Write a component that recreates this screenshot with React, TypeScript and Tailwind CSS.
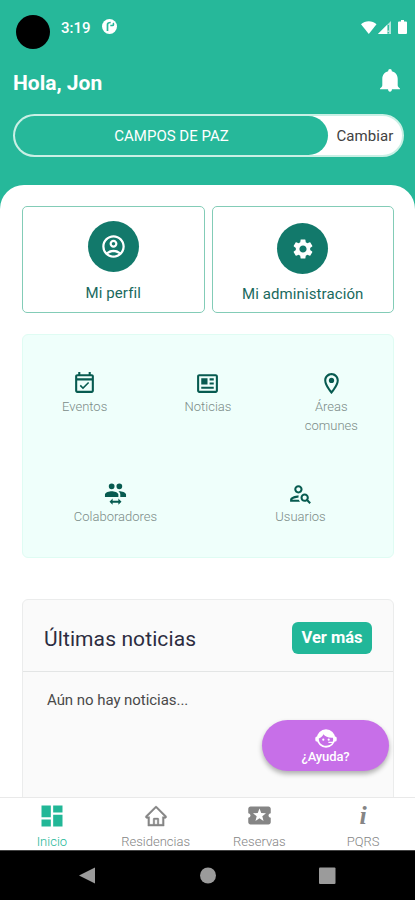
import { ReactNode } from "react";
import { AiOutlineHome } from "react-icons/ai";
import { BiNews } from "react-icons/bi";
import {
  MdDashboard,
  MdLocalActivity,
  MdOutlineAccountCircle,
  MdOutlineEventAvailable,
  MdOutlineLocationOn,
  MdOutlinePersonSearch,
  MdSettings,
} from "react-icons/md";

const BellIcon = () => (
  <svg className="mt-[4px]" width="20" height="24" viewBox="0 0 20 24" fill="white">
    <path d="M8.200 2.200V1.800a1.800 1.800 0 0 1 3.600 0v.4c3.700 1 5.900 3.900 5.900 7.600v6.400c0 1.200 1 2.300 2.300 3.400v.6H0v-.6c1.300-1.100 2.300-2.200 2.300-3.400V9.800c0-3.700 2.200-6.600 5.900-7.600ZM8 20h4c0 1.600-.8 2.800-2 2.800S8 21.600 8 20Z" />
  </svg>
);

const TeamSwitchIcon = () => (
  <svg width="23" height="24" viewBox="0 0 24 24" fill="currentColor">
    <path d="M16 9c2.330 0 7 1.170 7 3.500V15h-6v-2.500c0-1.500-.81-2.610-1.960-3.450L16 9M8 9c2.330 0 7 1.170 7 3.500V15H1v-2.500C1 10.170 5.670 9 8 9m0-2a3 3 0 1 1 0-6 3 3 0 0 1 0 6m8 0a3 3 0 1 1 0-6 3 3 0 0 1 0 6m-7 9.750V19h6v-2.250L18.250 20 15 23.250V21H9v2.250L5.750 20 9 16.750Z" />
  </svg>
);

const AgentIcon = () => (
  <svg width="22" height="20" viewBox="0 0 22 20">
    <circle cx="11" cy="9.500" r="9.200" fill="white" />
    <rect x="0.300" y="7.500" width="21.400" height="5" rx="1.500" fill="white" />
    <path
      d="M3.800 9.500c2.200-.8 3.700-2.100 4.600-4.200 1.900 2.500 5 3.800 9.600 3.500.3 1.500.2 2.800-.3 4h-4.300v1.300h3.700c-1.300 1.700-3.600 2.700-6.100 2.700-4.100 0-7.400-3-7.200-7.300Z"
      fill="#c76fe8"
    />
    <circle cx="8.300" cy="10.700" r="1.100" fill="white" />
    <circle cx="13.700" cy="10.700" r="1.100" fill="white" />
  </svg>
);

const StatusBar = () => (
  <div className="flex h-[65px] items-start pl-4 pr-[7px] pt-[15px] text-white">
    <span className="h-[34px] w-[34px] rounded-full bg-black" />
    <span className="ml-[11px] mt-[3px] text-[15px] font-medium leading-5">3:19</span>
    <svg className="ml-[11px] mt-[4px]" width="15" height="15" viewBox="0 0 15 15">
      <circle cx="7.500" cy="7.500" r="7.500" fill="white" />
      <path d="M5.500 12V5.500c0-1.300 1-2 3.200-2M8.300 6.500h2.200c1.100 0 1.400-1.700.3-2.200" fill="none" stroke="#26b89a" strokeWidth="1.700" />
    </svg>
    <div className="grow" />
    <svg className="mt-[5px]" width="48" height="15" viewBox="0 0 48 15" fill="white">
      <path d="M1 4.200C5 .3 12.500.3 16.500 4.200L8.800 14Z" />
      <path d="M18 14 31 1v13Z" fillOpacity=".65" />
      <path d="M18 14 27 5v9Z" />
      <path d="M28.300 5v5.500M28.300 12v1.500" stroke="#26b89a" strokeWidth="1.200" />
      <path d="M41 0h3v1.500h2q1 0 1 1V13q0 1-1 1h-7q-1 0-1-1V2.500q0-1 1-1h2Z" />
    </svg>
  </div>
);

const ProfileCard = ({ icon, label, lower }: { icon: ReactNode; label: string; lower?: boolean }) => (
  <div
    className={`flex h-[107px] flex-1 flex-col items-center rounded-[5px] border border-[#83ccb7] bg-white ${
      lower ? "pt-4" : "pt-[14px]"
    }`}
  >
    <div className="flex h-[51px] w-[51px] items-center justify-center rounded-full bg-[#12796b] text-white">
      {icon}
    </div>
    <p className={`${lower ? "mt-[10px]" : "mt-[11px]"} text-[15px] leading-5 tracking-[0.1px] text-[#19695d]`}>
      {label}
    </p>
  </div>
);

const Shortcut = ({ icon, label }: { icon: ReactNode; label: string }) => (
  <div className="flex flex-1 flex-col items-center text-[#075b50]">
    {icon}
    <p className="mt-px w-[86px] text-center text-[13px] font-light leading-[19px] text-[#7b8b87]">
      {label}
    </p>
  </div>
);

const tabs = [
  { label: "Inicio", icon: <MdDashboard size={28} />, active: true },
  { label: "Residencias", icon: <AiOutlineHome size={24} stroke="currentColor" strokeWidth={18} /> },
  { label: "Reservas", icon: <MdLocalActivity size={27} /> },
  {
    label: "PQRS",
    icon: (
      <span className="font-['Liberation_Serif',serif] text-[26px] font-bold italic leading-6">i</span>
    ),
  },
];

const App = () => {
  return (
    <div className="relative flex h-[900px] w-[415px] flex-col overflow-hidden bg-[#26b89a] font-[Roboto,sans-serif]">
      <StatusBar />
      <header className="h-[120px] shrink-0">
        <div className="flex h-[49px] items-start justify-between pl-[13px] pr-[15px] text-white">
          <h1 className="mt-[4px] text-[21px] font-bold leading-7">Hola, Jon</h1>
          <BellIcon />
        </div>
        <div className="ml-[13px] flex h-[43px] w-[391px] rounded-full border-2 border-[#c9f0e5] bg-white">
          <div className="flex w-[313px] items-center justify-center rounded-full bg-[#26b89a] pt-px text-[15px] text-white">
            CAMPOS DE PAZ
          </div>
          <span className="flex grow items-center justify-center pt-px text-[15px] tracking-[0.1px] text-[#414141]">
            Cambiar
          </span>
        </div>
      </header>
      <main className="h-[612px] shrink-0 overflow-hidden rounded-t-[24px] bg-white pl-[22px] pr-[21px] pt-[21px]">
        <section className="flex gap-[7px]">
          <ProfileCard icon={<MdOutlineAccountCircle size={27} />} label="Mi perfil" />
          <ProfileCard icon={<MdSettings size={24} />} label="Mi administración" lower />
        </section>
        <section className="mt-[21px] h-[224px] rounded-md border border-[#dffcf3] bg-[#effffb] pt-[36px]">
          <div className="flex h-[110px]">
            <Shortcut icon={<MdOutlineEventAvailable size={25} />} label="Eventos" />
            <Shortcut icon={<BiNews size={25} />} label="Noticias" />
            <Shortcut icon={<MdOutlineLocationOn size={25} />} label="Áreas comunes" />
          </div>
          <div className="flex items-end">
            <Shortcut icon={<TeamSwitchIcon />} label="Colaboradores" />
            <Shortcut icon={<MdOutlinePersonSearch size={25} />} label="Usuarios" />
          </div>
        </section>
        <section className="mt-[41px] h-[210px] rounded-t-md border border-[#ebecec] bg-[#fafafa]">
          <div className="flex h-[72px] items-center justify-between border-b border-[#e3e5e5] pl-[21px] pr-[21px] pt-[5px]">
            <h2 className="pt-0.5 text-[21px] leading-7 tracking-[0.1px] text-[#2c2c40]">Últimas noticias</h2>
            <button className="h-8 w-20 rounded-md bg-[#22b799] pt-px text-[16.5px] font-bold text-white">
              Ver más
            </button>
          </div>
          <p className="pl-[24px] pt-[18px] text-[15px] leading-5 tracking-[-0.05px] text-[#494949]">
            Aún no hay noticias...
          </p>
        </section>
      </main>
      <button className="absolute left-[262px] top-[720px] flex h-[51px] w-[127px] flex-col items-center rounded-full bg-[#c76fe8] pt-[9px] text-xs font-medium leading-[15px] text-white shadow-[0_3px_5px_rgba(0,0,0,0.3)]">
        <AgentIcon />
        <span className="text-[13px] tracking-[-0.1px]">¿Ayuda?</span>
      </button>
      <nav className="flex h-[53px] shrink-0 overflow-hidden border-t border-[#e9e9e9] bg-white">
        {tabs.map((tab) => (
          <div
            key={tab.label}
            className={`flex flex-1 flex-col items-center pt-1 ${
              tab.active ? "text-[#22b797]" : "text-[#858585]"
            }`}
          >
            <div className="flex h-[27px] items-center">{tab.icon}</div>
            <p className="mt-[5px] text-[13px] font-light leading-[16px]">{tab.label}</p>
          </div>
        ))}
      </nav>
      <footer className="h-[50px] shrink-0 border-t border-[#444444] bg-black">
        <svg width="415" height="49" viewBox="0 0 415 49" fill="#9b9b9b">
          <path d="M79 24.500 95 16.500v16Z" />
          <circle cx="208" cy="24.500" r="8" />
          <rect x="319" y="16.500" width="16.500" height="16.500" rx="1" />
        </svg>
      </footer>
    </div>
  );
};

export default App;
